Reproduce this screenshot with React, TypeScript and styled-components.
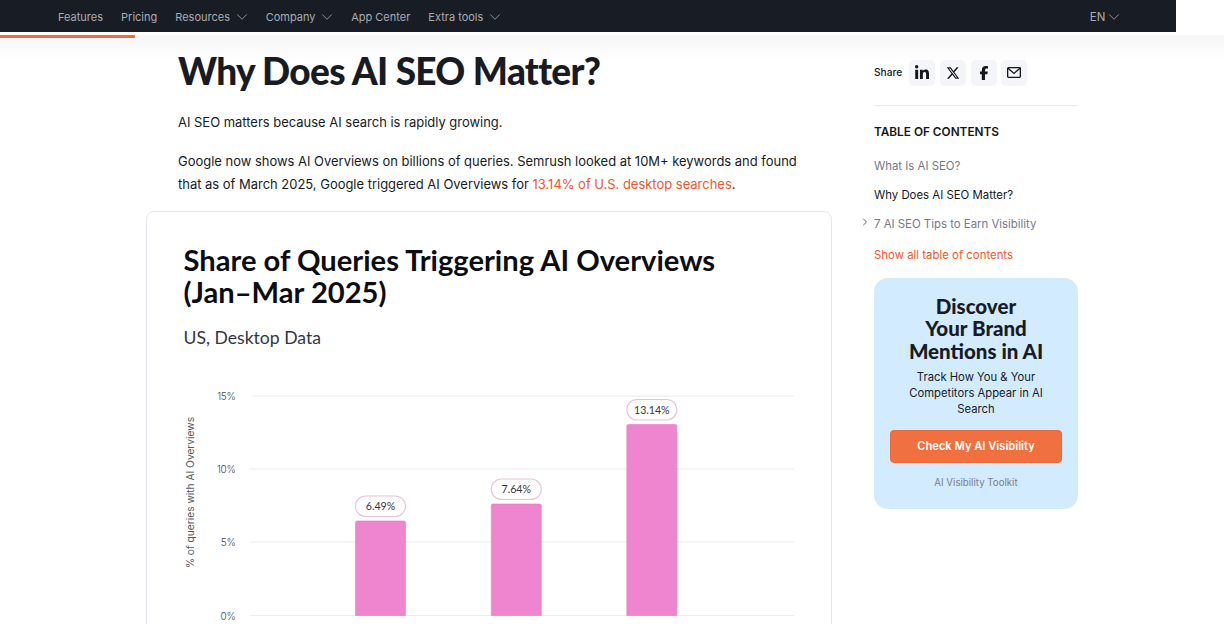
import React from "react";
import styled, { createGlobalStyle } from "styled-components";
import { ChevronDown, ChevronRight } from "lucide-react";
import { FaFacebookF, FaLinkedinIn, FaXTwitter } from "react-icons/fa6";

const Global = createGlobalStyle`
  html, body { margin: 0; padding: 0; background: #fff; }
  body { font-family: Inter, "Liberation Sans", sans-serif; color: #181b23; }
  * { box-sizing: border-box; }
`;

const Page = styled.div`
  position: relative;
  width: 1224px;
  height: 624px;
  overflow: hidden;
`;

const Header = styled.header`
  position: absolute;
  inset: 0 0 auto 0;
  height: 60px;
  pointer-events: none;
`;

const Nav = styled.nav`
  width: 1176px;
  height: 32px;
  background: #181c25;
  display: flex;
  align-items: center;
  padding: 2px 56px 0 58px;
  gap: 18px;
  color: #a9acb4;
  font-size: 11px;
`;

const NavItem = styled.span`
  display: inline-flex;
  align-items: center;
  gap: 3px;
  white-space: nowrap;
`;

const NavChevron = styled(ChevronDown)`
  margin-right: -3.3px;
`;

const NavRight = styled(NavItem)`
  margin-left: auto;
  font-size: 11.5px;
  gap: 0;
`;

const Track = styled.div`
  height: 28px;
  margin-top: 3px;
  background: linear-gradient(180deg, #f6f6f6 0%, #fdfdfd 75%, rgba(255, 255, 255, 0) 100%);
`;

const ProgressBar = styled.div`
  width: 135px;
  height: 3px;
  background: #f26b3e;
`;

const Main = styled.main`
  position: relative;
  display: flex;
  padding: 50px 0 0 178px;
  align-items: flex-start;
`;

const Article = styled.article`
  width: 654px;
  flex: none;
`;

const H1 = styled.h1`
  margin: 0 0 19px;
  font-family: Lato, sans-serif;
  font-size: 37px;
  line-height: 42px;
  font-weight: 900;
  letter-spacing: -0.68px;
  color: #181b23;
  white-space: nowrap;
`;

const Para = styled.p`
  margin: 0 0 16px;
  max-width: 630px;
  font-size: 12.96px;
  line-height: 23px;
  color: #181b23;
`;

const OrangeText = styled.span`
  color: #f0562a;
`;

const Figure = styled.figure`
  margin: -1px 0 0 -32px;
  width: 686px;
  height: 500px;
  padding: 31.5px 0 0 36.5px;
  border: 1.5px solid #e4e5eb;
  border-radius: 8px;
`;

const FigTitle = styled.h3`
  margin: 0;
  font-family: Lato, sans-serif;
  font-size: 29.15px;
  line-height: 32px;
  font-weight: 700;
  color: #0c0d11;
`;

const FigSub = styled.p`
  margin: 18px 0 0;
  font-family: Lato, sans-serif;
  font-size: 17.6px;
  line-height: 24px;
  color: #33363f;
`;

const ChartSvg = styled.svg`
  display: block;
  margin: 30px 0 0 -36.5px;
`;

const Aside = styled.aside`
  width: 204px;
  margin: 9.5px 0 0 42px;
  flex: none;
`;

const ShareRow = styled.div`
  display: flex;
  align-items: center;
  height: 26px;
  gap: 4.8px;
  font-size: 10.2px;
  font-weight: 500;
`;

const ShareLabel = styled.span`
  width: 30.2px;
  padding-bottom: 2px;
`;

const ShareBtn = styled.span`
  width: 26px;
  height: 26px;
  border-radius: 5px;
  background: #f4f5f9;
  display: flex;
  align-items: center;
  justify-content: center;
  color: #14161c;
`;

const Divider = styled.div`
  height: 1px;
  background: #e9eaee;
  margin: 19.5px 0 19px;
`;

const TocTitle = styled.div`
  font-size: 11.8px;
  line-height: 14px;
  font-weight: 600;
  color: #14161c;
  margin-bottom: 18.5px;
`;

const TocItem = styled.div<{ $active?: boolean; $orange?: boolean }>`
  position: relative;
  font-size: 11.4px;
  line-height: 17px;
  margin-top: ${(p) => (p.$orange ? 14 : 12.3)}px;
  color: ${(p) => (p.$orange ? "#f0562a" : p.$active ? "#14161c" : "#757887")};
`;

const TocCaret = styled.span`
  position: absolute;
  left: -15px;
  top: 0;
  color: #4a4d59;
  display: flex;
`;

const Promo = styled.section`
  margin-top: 14px;
  height: 231px;
  border-radius: 14px;
  background: #d2ebfe;
  padding: 16.5px 16px 0;
  display: flex;
  flex-direction: column;
  align-items: center;
  text-align: center;
`;

const PromoTitle = styled.h4`
  margin: 0;
  font-family: Lato, sans-serif;
  font-size: 20.5px;
  line-height: 22.5px;
  font-weight: 900;
  color: #181b23;
`;

const PromoText = styled.p`
  margin: 7px 0 0;
  font-size: 11.25px;
  line-height: 16px;
  color: #181b23;
`;

const PromoButton = styled.div`
  width: 172px;
  height: 32.5px;
  margin-top: 13px;
  border-radius: 4px;
  background: #f0703f;
  border: 1px solid #e9683a;
  color: #fff;
  font-size: 11.15px;
  font-weight: 600;
  display: flex;
  align-items: center;
  justify-content: center;
`;

const PromoFoot = styled.div`
  margin-top: 13px;
  font-size: 9.7px;
  line-height: 14px;
  color: #7b7e8c;
`;

const AxisLabel = styled.text`
  font-family: Inter, sans-serif;
  font-size: 10px;
  font-weight: 300;
  letter-spacing: -0.3px;
  fill: #44474e;
  text-anchor: end;
`;

const AxisTitle = styled.text`
  font-family: Inter, sans-serif;
  font-size: 10.2px;
  fill: #55585f;
  text-anchor: middle;
`;

const ValueLabel = styled.text`
  font-family: Lato, Inter, sans-serif;
  font-size: 10.6px;
  fill: #33363f;
  text-anchor: middle;
`;

const ticks = [
  { label: "15%", y: 396, x: 252 },
  { label: "10%", y: 469, x: 250 },
  { label: "5%", y: 542, x: 250 },
  { label: "0%", y: 615.5, x: 250 },
];

const bars = [
  { x: 356, top: 521, label: "6.49%" },
  { x: 491.8, top: 504, label: "7.64%" },
  { x: 627.3, top: 424.5, label: "13.14%" },
];

const Chart = () => (
  <ChartSvg width="683" height="260" viewBox="147.5 380 683 260">
    {ticks.map((t) => (
      <g key={t.label}>
        <line x1={t.x} x2="794.5" y1={t.y} y2={t.y} stroke="#ebecef" strokeWidth="1.2" />
        <AxisLabel x="236" y={t.y + 4}>{t.label}</AxisLabel>
      </g>
    ))}
    <AxisTitle transform="translate(194 492.5) rotate(-90)">% of queries with AI Overviews</AxisTitle>
    {bars.map((b) => (
      <g key={b.label}>
        <path
          d={`M${b.x} 615.5V${b.top + 1.5}q0-1.5 1.5-1.5h47q1.5 0 1.5 1.5V615.5z`}
          fill="#ef84cf"
          stroke="#e878c6"
          strokeWidth="0.6"
        />
        <rect x={b.x} y={b.top - 25} width="50" height="20.5" rx="10.2" fill="#fff" stroke="#e9c2dc" strokeWidth="1.1" />
        <ValueLabel x={b.x + 25} y={b.top - 11}>{b.label}</ValueLabel>
      </g>
    ))}
  </ChartSvg>
);

const chevron = <NavChevron size={18} strokeWidth={1.1} />;

const MailIcon = () => (
  <svg width="14" height="11" viewBox="0 0 14 11" fill="none" stroke="currentColor" strokeWidth="1.3">
    <rect x="0.65" y="0.65" width="12.7" height="9.7" rx="0.8" />
    <path d="M1 1.2 7 6.4l6-5.2" />
  </svg>
);

export default function App() {
  return (
    <Page>
      <Global />
      <Header>
        <Nav>
          <NavItem>Features</NavItem>
          <NavItem>Pricing</NavItem>
          <NavItem>Resources {chevron}</NavItem>
          <NavItem>Company {chevron}</NavItem>
          <NavItem>App Center</NavItem>
          <NavItem>Extra tools {chevron}</NavItem>
          <NavRight>EN {chevron}</NavRight>
        </Nav>
        <Track>
          <ProgressBar />
        </Track>
      </Header>
      <Main>
        <Article>
          <H1>Why Does AI SEO Matter?</H1>
          <Para>AI SEO matters because AI search is rapidly growing.</Para>
          <Para>
            Google now shows AI Overviews on billions of queries. Semrush looked at 10M+ keywords and found
            that as of March 2025, Google triggered AI Overviews for{" "}
            <OrangeText>13.14% of U.S. desktop searches</OrangeText>.
          </Para>
          <Figure>
            <FigTitle>
              Share of Queries Triggering AI Overviews
              <br />
              (Jan–Mar 2025)
            </FigTitle>
            <FigSub>US, Desktop Data</FigSub>
            <Chart />
          </Figure>
        </Article>
        <Aside>
          <ShareRow>
            <ShareLabel>Share</ShareLabel>
            <ShareBtn><FaLinkedinIn size={16} /></ShareBtn>
            <ShareBtn><FaXTwitter size={14} /></ShareBtn>
            <ShareBtn><FaFacebookF size={14} /></ShareBtn>
            <ShareBtn><MailIcon /></ShareBtn>
          </ShareRow>
          <Divider />
          <TocTitle>TABLE OF CONTENTS</TocTitle>
          <TocItem>What Is AI SEO?</TocItem>
          <TocItem $active>Why Does AI SEO Matter?</TocItem>
          <TocItem>
            <TocCaret><ChevronRight size={12} strokeWidth={1.8} /></TocCaret>
            7 AI SEO Tips to Earn Visibility
          </TocItem>
          <TocItem $orange>Show all table of contents</TocItem>
          <Promo>
            <PromoTitle>
              Discover
              <br />
              Your Brand
              <br />
              Mentions in AI
            </PromoTitle>
            <PromoText>Track How You &amp; Your Competitors Appear in AI Search</PromoText>
            <PromoButton>Check My AI Visibility</PromoButton>
            <PromoFoot>AI Visibility Toolkit</PromoFoot>
          </Promo>
        </Aside>
      </Main>
    </Page>
  );
}
